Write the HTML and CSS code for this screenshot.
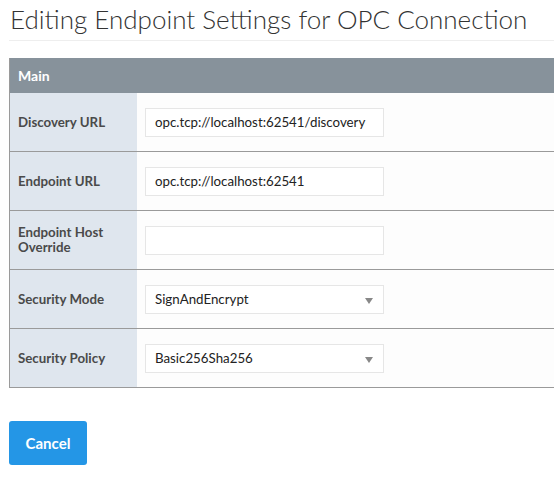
FILE: index.html
```html
<!DOCTYPE html>
<html>
<head>
<meta charset="utf-8">
<link rel="stylesheet" href="styles.css">
</head>
<body>
<div class="page">
  <h1 class="title">Editing Endpoint Settings for OPC Connection</h1>
  <div class="panel">
    <div class="panel-head">Main</div>
    <div class="row">
      <div class="label">Discovery URL</div>
      <div class="value"><div class="field">opc.tcp://localhost:62541/discovery</div></div>
    </div>
    <div class="row">
      <div class="label">Endpoint URL</div>
      <div class="value"><div class="field">opc.tcp://localhost:62541</div></div>
    </div>
    <div class="row">
      <div class="label">Endpoint Host<br>Override</div>
      <div class="value"><div class="field"></div></div>
    </div>
    <div class="row">
      <div class="label">Security Mode</div>
      <div class="value"><div class="field select">SignAndEncrypt<span class="arrow"></span></div></div>
    </div>
    <div class="row">
      <div class="label">Security Policy</div>
      <div class="value"><div class="field select">Basic256Sha256<span class="arrow"></span></div></div>
    </div>
  </div>
  <div class="actions">
    <button class="btn">Cancel</button>
  </div>
</div>
</body>
</html>
```

FILE: styles.css
```css
html, body {
  margin: 0;
  padding: 0;
  background: #fff;
  overflow: hidden;
}
.page {
  padding: 0 0 0 9px;
  font-family: Lato, "Open Sans", sans-serif;
  color: #444;
}
.title {
  margin: 0;
  padding: 6px 0 8px 1px;
  font-size: 26px;
  line-height: 26px;
  font-weight: 300;
  color: #333;
  border-bottom: 1px solid #eeeeee;
  white-space: nowrap;
}
.panel {
  margin-top: 17px;
  width: 545px;
  border-left: 1px solid #9a9a9a;
  border-bottom: 1px solid #9a9a9a;
}
.panel-head {
  height: 35px;
  background: #87929b;
  color: #fff;
  font-weight: 700;
  font-size: 14px;
  display: flex;
  align-items: center;
  padding-left: 8px;
}
.row {
  display: grid;
  grid-template-columns: 127px 1fr;
  height: 58px;
}
.row + .row {
  border-top: 1px solid #9a9a9a;
}
.label {
  background: #dfe6ee;
  font-weight: 700;
  font-size: 13.3px;
  line-height: 15px;
  color: #4a4a4a;
  display: flex;
  align-items: center;
  padding-left: 8px;
}
.value {
  background: #fdfdfd;
  display: flex;
  align-items: center;
  padding-left: 8px;
}
.field {
  box-sizing: border-box;
  width: 239px;
  height: 29px;
  border: 1px solid #e6e6e6;
  background: #fff;
  font-size: 13.3px;
  color: #222;
  display: flex;
  align-items: center;
  padding-left: 9px;
  position: relative;
}
.arrow {
  position: absolute;
  right: 10px;
  top: 12px;
  width: 0;
  height: 0;
  border-left: 4px solid transparent;
  border-right: 4px solid transparent;
  border-top: 6px solid #888;
}
.actions {
  padding-top: 33px;
}
.btn {
  width: 78px;
  height: 44px;
  border: none;
  border-radius: 3px;
  background: #2496e6;
  color: #fff;
  font-family: Lato, "Open Sans", sans-serif;
  font-weight: 700;
  font-size: 15px;
  padding: 0;
}
```
